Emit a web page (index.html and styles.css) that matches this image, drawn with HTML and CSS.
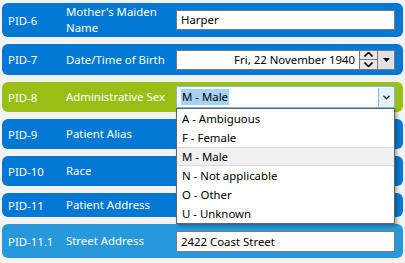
FILE: index.html
```html
<!DOCTYPE html>
<html>
<head>
<meta charset="utf-8">
<link rel="stylesheet" href="styles.css">
</head>
<body>
<div class="list">
  <div class="row r-tall">
    <div class="pid">PID-6</div>
    <div class="label">Mother's Maiden<br>Name</div>
    <div class="ctrl"><div class="textbox">Harper</div></div>
  </div>
  <div class="row r-mid">
    <div class="pid">PID-7</div>
    <div class="label">Date/Time of Birth</div>
    <div class="ctrl">
      <div class="datebox">
        <span class="datetext">Fri, 22 November 1940</span>
        <div class="spin">
          <div class="spin-half"><svg width="9" height="5" viewBox="0 0 9 5"><path d="M0.5 4.5 L4.5 0.5 L8.5 4.5" fill="none" stroke="#000" stroke-width="1.6"/></svg></div>
          <div class="spin-half"><svg width="9" height="5" viewBox="0 0 9 5"><path d="M0.5 0.5 L4.5 4.5 L8.5 0.5" fill="none" stroke="#000" stroke-width="1.6"/></svg></div>
        </div>
        <div class="dropbtn"><svg width="7" height="4" viewBox="0 0 7 4"><path d="M0 0 L3.5 4 L7 0 Z" fill="#000"/></svg></div>
      </div>
    </div>
  </div>
  <div class="row r-std green">
    <div class="pid">PID-8</div>
    <div class="label">Administrative Sex</div>
    <div class="ctrl combo-wrap">
      <div class="combo">
        <span class="sel">M - Male</span>
        <div class="combobtn"><svg width="7" height="5" viewBox="0 0 7 5"><path d="M0.5 0.8 L3.5 3.8 L6.5 0.8" fill="none" stroke="#222" stroke-width="1.3"/></svg></div>
      </div>
      <ul class="droplist">
        <li>A - Ambiguous</li>
        <li>F - Female</li>
        <li class="hover">M - Male</li>
        <li>N - Not applicable</li>
        <li>O - Other</li>
        <li>U - Unknown</li>
      </ul>
    </div>
  </div>
  <div class="row r-std">
    <div class="pid">PID-9</div>
    <div class="label">Patient Alias</div>
  </div>
  <div class="row r-std">
    <div class="pid">PID-10</div>
    <div class="label">Race</div>
  </div>
  <div class="row r-short">
    <div class="pid">PID-11</div>
    <div class="label">Patient Address</div>
  </div>
  <div class="row r-big light">
    <div class="pid">PID-11.1</div>
    <div class="label">Street Address</div>
    <div class="ctrl"><div class="textbox tb-addr">2422 Coast Street</div></div>
  </div>
</div>
</body>
</html>
```
FILE: styles.css
```css
html, body {
  margin: 0;
  padding: 0;
  background: #f2f2f2;
  font-family: "Noto Sans", "Open Sans", sans-serif;
  font-size: 11.4px;
  overflow: hidden;
}
.list {
  display: flex;
  flex-direction: column;
  gap: 7px;
  padding: 3px 0 0 2px;
  width: 401px;
}
.row {
  display: flex;
  align-items: center;
  background: #0078d4;
  color: #fff;
  border-radius: 6px;
  box-sizing: border-box;
}
.green { background: #99bf17; }
.light { background: #2898dd; }
.r-tall { height: 34px; }
.r-mid { height: 31px; }
.r-std { height: 30px; }
.r-short { height: 24px; }
.r-big { height: 34px; }
.pid {
  width: 58px;
  padding-left: 6px;
  flex: none;
}
.label {
  width: 110px;
  flex: none;
  line-height: 16px;
}
.ctrl {
  width: 219px;
  flex: none;
}
.textbox {
  height: 20px;
  box-sizing: border-box;
  border: 1px solid #7a7a7a;
  background: #fff;
  color: #000;
  padding-left: 4px;
  line-height: 18px;
}
.tb-addr { height: 21px; line-height: 19px; }
.datebox {
  height: 20px;
  box-sizing: border-box;
  border: 1px solid #7a7a7a;
  background: #fff;
  color: #000;
  display: flex;
  align-items: stretch;
}
.datetext {
  flex: 1;
  text-align: right;
  padding-right: 4px;
  line-height: 18px;
}
.spin {
  width: 17px;
  display: flex;
  flex-direction: column;
  border-left: 1px solid #7a7a7a;
  background: #e6e6e6;
  margin: -1px 0;
  border-top: 1px solid #7a7a7a;
  border-bottom: 1px solid #7a7a7a;
}
.spin-half {
  flex: 1;
  display: flex;
  align-items: center;
  justify-content: center;
}
.spin-half + .spin-half { border-top: 1px solid #7a7a7a; }
.dropbtn {
  width: 16px;
  background: #e1e1e1;
  border-left: 1px solid #7a7a7a;
  display: flex;
  align-items: center;
  justify-content: center;
}
.combo-wrap { position: relative; }
.combo {
  height: 22px;
  box-sizing: border-box;
  border: 1px solid #7eb4ea;
  background: #fff;
  color: #000;
  display: flex;
  align-items: center;
  padding-left: 4px;
}
.sel {
  background: #a8d0f3;
  padding: 0 1px;
  line-height: 16px;
  flex: none;
}
.combobtn {
  margin-left: auto;
  width: 16px;
  height: 19px;
  box-sizing: border-box;
  border-left: 1px solid #7eb4ea;
  background: #e5f1fb;
  display: flex;
  align-items: center;
  justify-content: center;
}
.droplist {
  position: absolute;
  top: 22px;
  left: 0;
  width: 219px;
  box-sizing: border-box;
  margin: 0;
  padding: 0;
  list-style: none;
  background: #fff;
  border: 1px solid #646464;
  color: #000;
  box-shadow: 2px 2px 3px rgba(0,0,0,0.3);
  z-index: 5;
}
.droplist li {
  height: 19px;
  line-height: 19px;
  padding-left: 5px;
  box-sizing: border-box;
}
.droplist li.hover {
  background: #f0f0f0;
  border-top: 1px solid #dadada;
  border-bottom: 1px solid #dadada;
  line-height: 17px;
}
```
